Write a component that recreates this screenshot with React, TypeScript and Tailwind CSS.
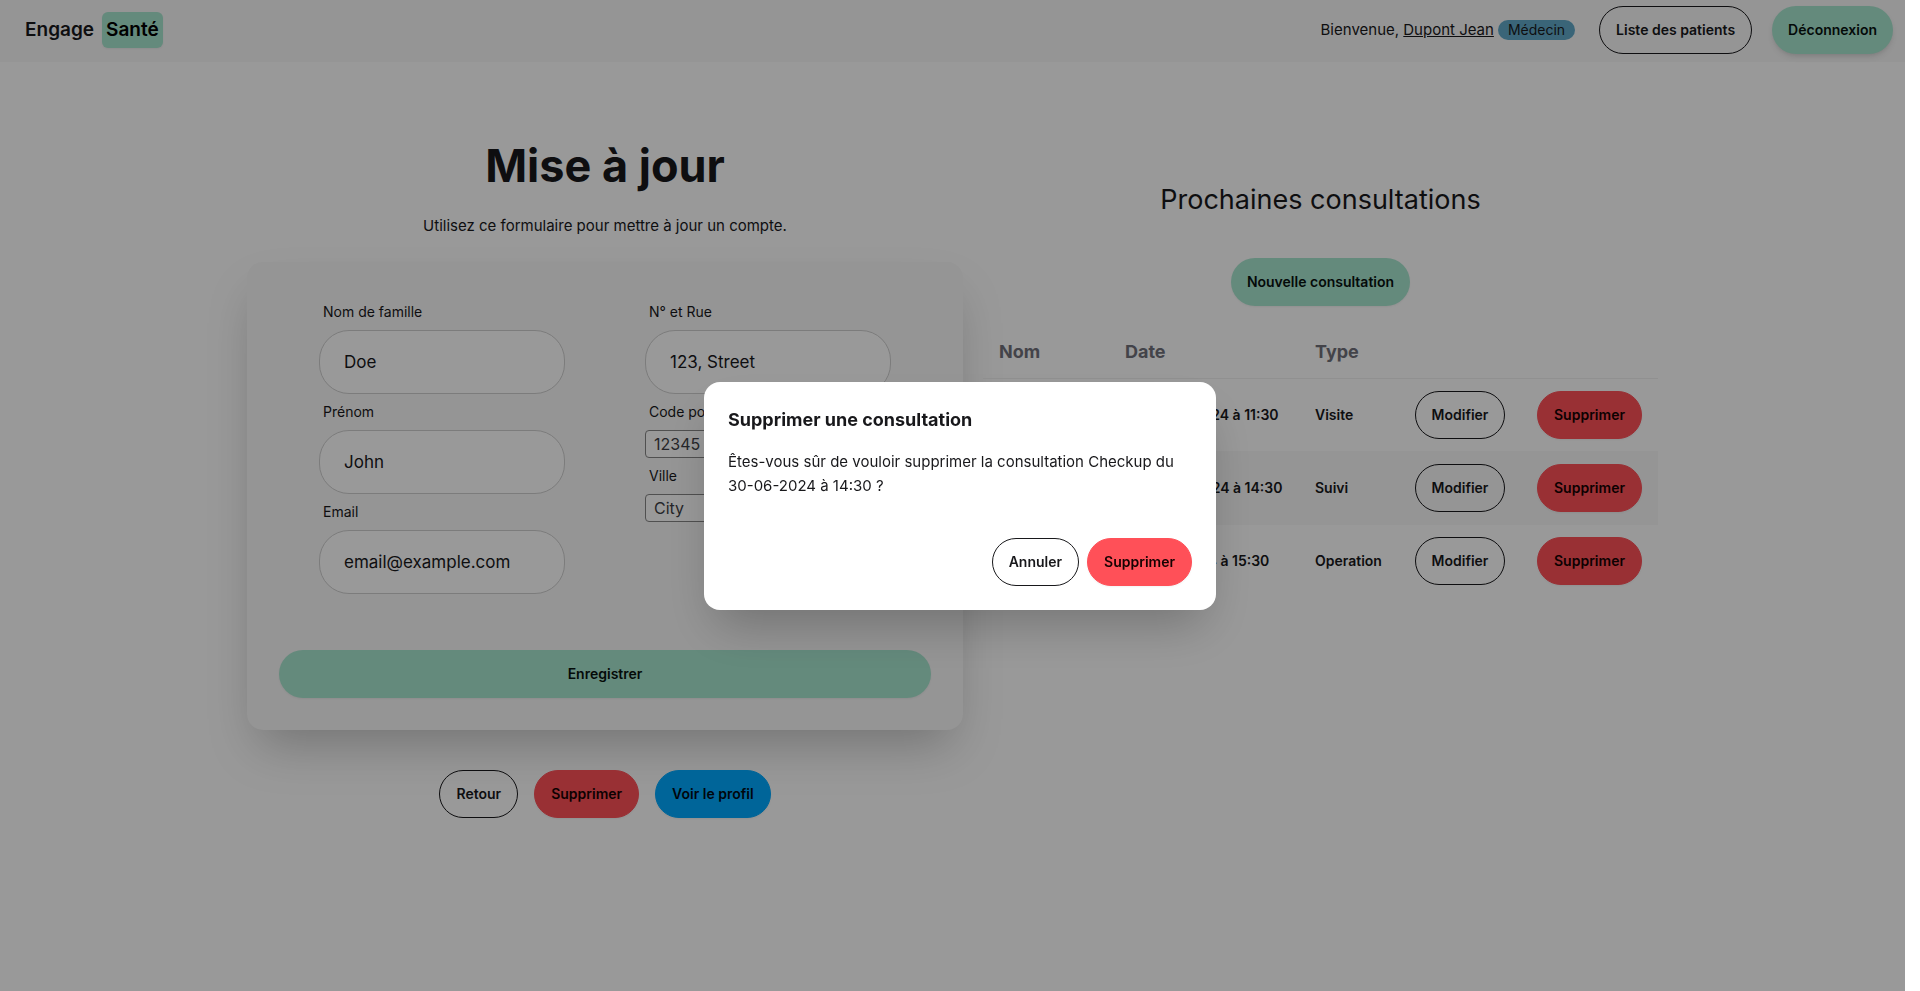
import type { ReactNode } from "react";

type Tone = "outline" | "primary" | "error" | "info";

const tones: Record<Tone, string> = {
  outline: "border border-[#18181b] text-[#18181b]",
  primary: "bg-[#a7e6cf] text-[#08120f]",
  error: "border border-[#ff5058] bg-[#ff5058] text-[#160202] shadow-xs",
  info: "border border-[#00a9ff] bg-[#00a9ff] text-[#000a16] shadow-xs",
};

function Button({ tone, children, className = "" }: { tone: Tone; children: ReactNode; className?: string }) {
  return (
    <button
      type="button"
      className={`flex h-12 items-center justify-center rounded-[30px] px-4 text-sm font-semibold whitespace-nowrap ${tones[tone]} ${className}`}
    >
      {children}
    </button>
  );
}

function Field({
  id,
  label,
  value,
  type = "text",
  plain = false,
}: {
  id: string;
  label: string;
  value: string;
  type?: string;
  plain?: boolean;
}) {
  return (
    <div className="flex flex-col">
      <label htmlFor={id} className="px-1 py-2 text-sm">
        {label}
      </label>
      <input
        id={id}
        type={type}
        defaultValue={value}
        className={
          plain
            ? "h-7 w-full rounded border border-[#858585] bg-white px-2 text-base text-[#3f3f46]"
            : "h-16 w-full rounded-[30px] border border-[#cfcfcf] bg-white px-6 text-[17px]"
        }
      />
    </div>
  );
}

const consultations = [
  { name: "Consultation", date: "Le 28-06-2024 à 11:30", type: "Visite" },
  { name: "Checkup", date: "Le 30-06-2024 à 14:30", type: "Suivi" },
  { name: "Chirurgie", date: "Le 11-11-2024 à 15:30", type: "Operation" },
];

function Navbar() {
  return (
    <header className="flex items-center justify-between bg-[#f8f8f8] pt-1.5 pr-3 pb-2 pl-[25px]">
      <a href="#accueil" className="flex items-center gap-2 text-[19px] leading-7 font-semibold">
        Engage
        <span className="rounded-md bg-[#a7e6cf] px-1 py-1 text-black shadow-xs">Santé</span>
      </a>
      <nav className="flex items-center">
        <p className="mr-6 flex items-center gap-1 text-[15px] leading-6">
          <span>
            Bienvenue,{" "}
            <a href="#profil" className="underline">
              Dupont Jean
            </a>
          </span>
          <span className="flex h-5 items-center rounded-full bg-[#61a9c8] px-2.5 text-sm">Médecin</span>
        </p>
        <Button tone="outline">Liste des patients</Button>
        <Button tone="primary" className="ml-5 shadow-md">
          Déconnexion
        </Button>
      </nav>
    </header>
  );
}

function UpdateForm() {
  return (
    <section className="flex w-[716px] flex-col items-center">
      <h1 className="text-[45px] leading-12 font-bold">Mise à jour</h1>
      <p className="py-6 text-[15px] leading-6">Utilisez ce formulaire pour mettre à jour un compte.</p>
      <form className="w-full rounded-2xl bg-[#f8f8f8] p-8 shadow-2xl">
        <div className="grid grid-cols-2">
          <div className="px-10">
            <Field id="nom" label="Nom de famille" value="Doe" />
            <Field id="prenom" label="Prénom" value="John" />
            <Field id="email" label="Email" type="email" value="email@example.com" />
          </div>
          <div className="px-10">
            <Field id="rue" label="N° et Rue" value="123, Street" />
            <Field id="code-postal" label="Code postal" value="12345" plain />
            <Field id="ville" label="Ville" value="City" plain />
          </div>
        </div>
        <Button tone="primary" className="mt-14 w-full shadow-xs">
          Enregistrer
        </Button>
      </form>
      <div className="mt-10 flex gap-4">
        <Button tone="outline">Retour</Button>
        <Button tone="error">Supprimer</Button>
        <Button tone="info">Voir le profil</Button>
      </div>
    </section>
  );
}

function Consultations() {
  return (
    <section className="flex w-[675px] flex-col items-center">
      <h2 className="my-10 text-[27px] leading-9">Prochaines consultations</h2>
      <Button tone="primary" className="shadow-xs">
        Nouvelle consultation
      </Button>
      <table className="mt-5 w-full table-fixed text-left text-sm font-semibold">
        <colgroup>
          <col className="w-[126px]" />
          <col className="w-[190px]" />
          <col className="w-[100px]" />
          <col className="w-[122px]" />
          <col className="w-[137px]" />
        </colgroup>
        <thead>
          <tr className="border-b border-[#f0f0f0] text-lg leading-7 text-[#71717a]">
            <th className="px-4 py-3 font-bold">Nom</th>
            <th className="px-4 py-3 font-bold">Date</th>
            <th className="px-4 py-3 font-bold">Type</th>
            <th />
            <th />
          </tr>
        </thead>
        <tbody>
          {consultations.map((c) => (
            <tr key={c.name} className="border-b border-[#f8f8f8] last:border-0 even:bg-[#f8f8f8]">
              <td className="px-4 py-3">{c.name}</td>
              <td className="px-4 py-3 whitespace-nowrap">{c.date}</td>
              <td className="px-4 py-3">{c.type}</td>
              <td className="px-4 py-3">
                <Button tone="outline" className="w-full">
                  Modifier
                </Button>
              </td>
              <td className="px-4 py-3">
                <Button tone="error" className="w-full">
                  Supprimer
                </Button>
              </td>
            </tr>
          ))}
        </tbody>
      </table>
    </section>
  );
}

function DeleteDialog() {
  return (
    <div className="fixed inset-0 flex items-center justify-center">
      <div className="absolute inset-y-0 right-[15px] left-0 bg-black/40" />
      <div
        role="dialog"
        aria-modal="true"
        aria-labelledby="dialog-title"
        className="relative w-lg rounded-2xl bg-white p-6 shadow-2xl"
      >
        <h3 id="dialog-title" className="text-lg leading-7 font-bold">
          Supprimer une consultation
        </h3>
        <p className="py-4 text-[15px] leading-6">
          Êtes-vous sûr de vouloir supprimer la consultation Checkup du 30-06-2024 à 14:30 ?
        </p>
        <div className="mt-6 flex justify-end gap-2">
          <Button tone="outline">Annuler</Button>
          <Button tone="error">Supprimer</Button>
        </div>
      </div>
    </div>
  );
}

export default function App() {
  return (
    <div className="min-h-screen bg-white pr-[15px] font-['Inter','Liberation_Sans',sans-serif] text-[#18181b]">
      <Navbar />
      <main className="flex items-start justify-center gap-5 pt-20">
        <UpdateForm />
        <Consultations />
      </main>
      <DeleteDialog />
    </div>
  );
}
